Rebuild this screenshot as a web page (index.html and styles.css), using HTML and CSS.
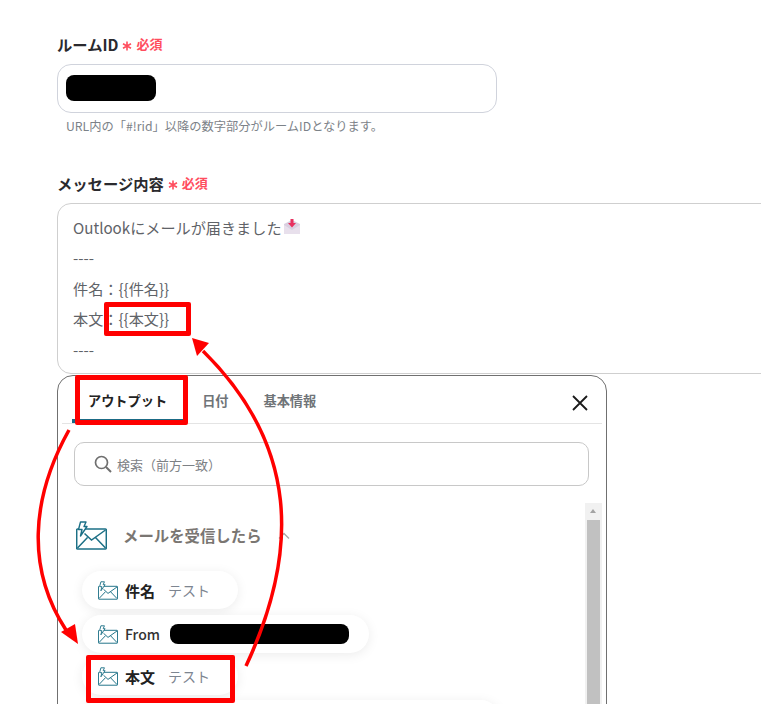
FILE: index.html
```html
<!DOCTYPE html>
<html lang="ja">
<head>
<meta charset="utf-8">
<title>メッセージ設定</title>
<link rel="stylesheet" href="styles.css">
</head>
<body>
<svg width="0" height="0" class="defs">
  <symbol id="mail" viewBox="0 0 31 29">
    <path d="M8 8H29.5a.8.8 0 0 1 .8.8V27.2a.8.8 0 0 1-.8.8H1.5a.8.8 0 0 1-.8-.8V8.8a.8.8 0 0 1 .8-.8H2" fill="none" stroke="currentColor" stroke-width="1.5"/>
    <path d="M8.5 12.5 15.5 19 29.5 9M1.5 27 11.5 16.5M29.5 27 19.5 16.5" fill="none" stroke="currentColor" stroke-width="1.5"/>
    <path d="M4.5 1H10L8 5.5H11L4.5 15 6 8.5H2.5Z" fill="#fff" stroke="currentColor" stroke-width="1.4" stroke-linejoin="round"/>
  </symbol>
  <symbol id="star" viewBox="0 0 10 10">
    <path d="M5 .5V9.500M1 2.700 9 7.300M9 2.700 1 7.300" fill="none" stroke="currentColor" stroke-width="1.600"/>
  </symbol>
</svg>
<main class="page">
  <section class="field room">
    <h2 class="label">ルームID<span class="req"><svg class="star"><use href="#star"/></svg>必須</span></h2>
    <div class="input"><span class="mask mask-room"></span></div>
    <p class="help">URL内の「#!rid」以降の数字部分がルームIDとなります。</p>
  </section>
  <section class="field message">
    <h2 class="label">メッセージ内容<span class="req"><svg class="star"><use href="#star"/></svg>必須</span></h2>
    <div class="textarea">
      <p class="line">Outlookにメールが届きました<svg class="emoji" viewBox="0 0 18 16" width="18" height="16"><path d="M1 5 9 1l8 4v10H1Z" fill="#d9cfe0"/><path d="M1 6l8 5 8-5v9H1Z" fill="#e8e0ec"/><path d="M7.5 0h3v4H13L9 8.500 5 4h2.500Z" fill="#e8305f"/></svg></p>
      <p class="line">----</p>
      <p class="line">件名：{{件名}}</p>
      <p class="line">本文：{{本文}}</p>
      <p class="line">----</p>
    </div>
  </section>
  <section class="panel">
    <div class="tabs">
      <span class="tab active">アウトプット</span>
      <span class="tab">日付</span>
      <span class="tab">基本情報</span>
      <svg class="close" viewBox="0 0 16 16" width="16" height="16"><path d="M1 1 15 15M15 1 1 15" stroke="#1a1a1a" stroke-width="1.800"/></svg>
    </div>
    <div class="search">
      <svg viewBox="0 0 18 18" width="18" height="18"><circle cx="7.500" cy="7.500" r="6" fill="none" stroke="#6f6f6f" stroke-width="1.700"/><path d="M12 12 17 17" stroke="#6f6f6f" stroke-width="2"/></svg>
      <span>検索（前方一致）</span>
    </div>
    <div class="scroller">
      <div class="list">
        <div class="group">
          <svg class="group-icon"><use href="#mail"/></svg>
          <span class="group-title">メールを受信したら</span>
          <svg class="chev" viewBox="0 0 12 7" width="12" height="7"><path d="M1 6.500 6 1.500 11 6.500" fill="none" stroke="#a8a8a8" stroke-width="1.400"/></svg>
        </div>
        <div class="pill"><svg class="pill-icon"><use href="#mail"/></svg><b>件名</b><span class="val">テスト</span></div>
        <div class="pill"><svg class="pill-icon"><use href="#mail"/></svg><span class="name">From</span><span class="mask mask-from"></span></div>
        <div class="pill"><svg class="pill-icon"><use href="#mail"/></svg><b>本文</b><span class="val">テスト</span></div>
        <div class="pill pill-next"></div>
      </div>
      <div class="scrollbar"><span class="arrow"></span><span class="thumb"></span></div>
    </div>
  </section>
</main>
<div class="mark mark-body"></div>
<div class="mark mark-tab"></div>
<div class="mark mark-pill"></div>
<svg class="arrows" viewBox="0 0 761 704" width="761" height="704">
  <path d="M69 430C30 500 27 570 66 630" fill="none" stroke="#f00" stroke-width="3.500"/>
  <path d="M78 644 61 632 75 624Z" fill="#f00"/>
  <path d="M246 666C300 550 298 445 203 351" fill="none" stroke="#f00" stroke-width="3.500"/>
  <path d="M192 338 197 356 209 343Z" fill="#f00"/>
</svg>
</body>
</html>
```
FILE: styles.css
```css
* { box-sizing: border-box; }
html, body { margin: 0; height: 704px; overflow: hidden; background: #fff; }
body {
  position: relative;
  font-family: "Noto Sans CJK JP", "Noto Sans", sans-serif;
  color: #333;
}
.defs { position: absolute; }
.page { padding: 34px 0 0 57px; width: 761px; height: 704px; overflow: hidden; }
.label {
  margin: 0;
  display: flex;
  align-items: center;
  height: 20px;
  font-size: 15.300px;
  line-height: 20px;
  font-weight: 700;
  color: #2a2a2e;
  white-space: nowrap;
}
.req {
  display: flex;
  align-items: center;
  margin-left: 4px;
  font-size: 13px;
  font-weight: 700;
  color: #ff4d5e;
}
.star { width: 10px; height: 10px; margin: 3px 4px 0 0; }
.input {
  margin-top: 10px;
  width: 440px;
  height: 49px;
  padding: 10px 8px;
  border: 1px solid #d0d3dc;
  border-radius: 14px;
}
.mask { display: block; background: #000; }
.mask-room { width: 90px; height: 26px; border-radius: 8px; }
.help {
  margin: 5px 0 0 9px;
  font-size: 12.250px;
  line-height: 17px;
  color: #7c8288;
  white-space: nowrap;
}
.message { margin-top: 38px; }
.textarea {
  margin-top: 10px;
  width: 760px;
  height: 171px;
  padding: 7.500px 0 0 15px;
  border: 1px solid #cfcfcf;
  border-radius: 14px;
}
.line {
  margin: 0;
  height: 30.500px;
  font-size: 15.150px;
  line-height: 30.500px;
  color: #5f6368;
  white-space: nowrap;
  display: flex;
  align-items: center;
}
.emoji { margin-left: 1px; }
.panel {
  margin-top: 1px;
  width: 550px;
  height: 340px;
  border: 1px solid #707070;
  border-radius: 16px 16px 0 0;
  padding: 0 4px;
  background: #fff;
}
.tabs {
  position: relative;
  display: flex;
  align-items: center;
  height: 48px;
  padding: 2px 0 0 26px;
  border-bottom: 1px solid #e4e4e4;
  font-size: 13.200px;
  font-weight: 700;
  color: #6f7478;
}
.tab { margin-right: 35px; }
.tab.active {
  color: #222;
  position: relative;
}
.tab.active::after {
  content: "";
  position: absolute;
  left: -16px;
  right: -16px;
  top: 28px;
  height: 4px;
  background: #1b6a85;
}
.close { position: absolute; right: 14px; top: 19px; }
.search {
  margin: 18px 13px 0 12px;
  height: 44px;
  display: flex;
  align-items: center;
  gap: 5px;
  padding-left: 19px;
  border: 1px solid #c8c8c8;
  border-radius: 10px;
  font-size: 13px;
  color: #7d8185;
}
.scroller {
  display: flex;
  margin-top: 17px;
  height: 220px;
}
.list { flex: 1; min-width: 0; padding: 17px 0 0 20px; }
.group {
  display: flex;
  align-items: center;
  height: 30px;
  margin: 0 0 21px -6px;
  color: #1c7086;
}
.group-icon { width: 31px; height: 29px; }
.group-title {
  margin-left: 16px;
  font-size: 15.400px;
  font-weight: 700;
  color: #7a7672;
}
.chev { margin-left: 16px; }
.pill {
  display: inline-flex;
  align-items: center;
  float: left;
  clear: left;
  height: 38px;
  margin-bottom: 6px;
  padding: 0 20px 0 16px;
  border-radius: 19px;
  background: #fff;
  box-shadow: 0 2px 12px rgba(0, 0, 0, .08);
  color: #1c7086;
  font-size: 14px;
}
.pill:nth-child(3) { margin-bottom: 4px; }
.pill:nth-child(4) { margin-bottom: 5px; }
.pill-icon { width: 20px; height: 19px; margin-right: 7px; }
.pill b { color: #222; font-weight: 700; font-size: 15px; }
.name { color: #333; font-weight: 500; font-size: 14px; }
.val { margin: 0 8px 0 13px; color: #7d8590; font-size: 14px; }
.mask-from { width: 179px; height: 20px; border-radius: 8px; margin-left: 10px; }
.pill-next { width: 418px; }
.scrollbar {
  position: relative;
  width: 17px;
  flex: none;
  background: #f1f1f1;
}
.arrow {
  position: absolute;
  left: 5px;
  top: 6px;
  border-left: 3.500px solid transparent;
  border-right: 3.500px solid transparent;
  border-bottom: 4px solid #a3a3a3;
}
.thumb {
  position: absolute;
  left: 2px;
  right: 2px;
  top: 17px;
  bottom: 0;
  background: #c1c1c1;
}
.mark {
  position: absolute;
  border: 5px solid #f00;
  border-radius: 2px;
}
.mark-body { left: 104px; top: 302px; width: 87px; height: 34px; }
.mark-tab { left: 75px; top: 375px; width: 113px; height: 50px; }
.mark-pill { left: 86px; top: 655px; width: 149px; height: 48px; }
.arrows { position: absolute; left: 0; top: 0; pointer-events: none; }
```
